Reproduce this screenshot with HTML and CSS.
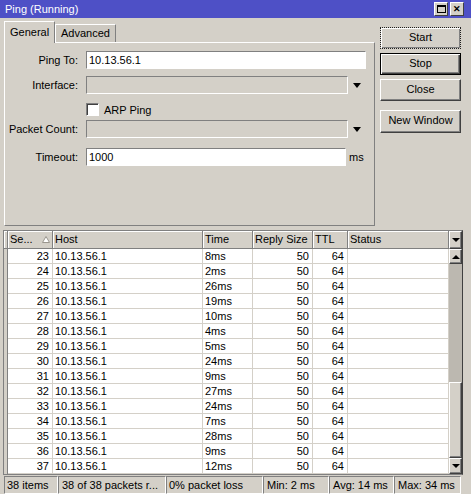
FILE: index.html
```html
<!DOCTYPE html>
<html lang="en">
<head>
    <meta charset="UTF-8">
    <title>Ping (Running)</title>
    <link rel="stylesheet" href="styles.css">
</head>
<body>

<div class="window">
    <div class="titlebar">
        <span class="title">Ping (Running)</span>
        <span class="title-btns">
            <span class="tbtn"><span class="max-box"></span></span>
            <span class="tbtn tbtn-close">&#x2715;</span>
        </span>
    </div>

    <div class="top">
        <div class="tabs-area">
            <div class="tabs">
                <div class="tab active">General</div>
                <div class="tab">Advanced</div>
            </div>
            <div class="panel">
                <div class="form">
                    <label>Ping To:</label>
                    <div class="field"><div class="input w-full">10.13.56.1</div></div>

                    <label>Interface:</label>
                    <div class="field"><div class="input disabled w-drop"></div><span class="drop-arrow"></span></div>

                    <label></label>
                    <div class="field check-field"><span class="checkbox"></span><span class="check-label">ARP Ping</span></div>

                    <label>Packet Count:</label>
                    <div class="field"><div class="input disabled w-drop"></div><span class="drop-arrow"></span></div>

                    <label>Timeout:</label>
                    <div class="field"><div class="input w-unit">1000</div><span class="unit">ms</span></div>
                </div>
            </div>
        </div>

        <div class="buttons">
            <div class="btn btn-focus">Start</div>
            <div class="btn btn-default">Stop</div>
            <div class="btn">Close</div>
            <div class="btn btn-gap">New Window</div>
        </div>
    </div>

    <div class="list">
        <div class="list-body">
            <div class="grid-row head">
                <span class="hc gut"></span>
                <span class="hc sort">Se...<svg width="8" height="7" viewBox="0 0 8 7"><polygon points="4,0.5 7.5,6.5 0.5,6.5" fill="#fff" stroke="#9a968e"/></svg></span>
                <span class="hc">Host</span>
                <span class="hc">Time</span>
                <span class="hc">Reply Size</span>
                <span class="hc">TTL</span>
                <span class="hc">Status</span>
            </div>
            <div class="grid-row row"><span class="c gut"></span><span class="c num">23</span><span class="c">10.13.56.1</span><span class="c">8ms</span><span class="c num">50</span><span class="c num">64</span><span class="c"></span></div>
            <div class="grid-row row"><span class="c gut"></span><span class="c num">24</span><span class="c">10.13.56.1</span><span class="c">2ms</span><span class="c num">50</span><span class="c num">64</span><span class="c"></span></div>
            <div class="grid-row row"><span class="c gut"></span><span class="c num">25</span><span class="c">10.13.56.1</span><span class="c">26ms</span><span class="c num">50</span><span class="c num">64</span><span class="c"></span></div>
            <div class="grid-row row"><span class="c gut"></span><span class="c num">26</span><span class="c">10.13.56.1</span><span class="c">19ms</span><span class="c num">50</span><span class="c num">64</span><span class="c"></span></div>
            <div class="grid-row row"><span class="c gut"></span><span class="c num">27</span><span class="c">10.13.56.1</span><span class="c">10ms</span><span class="c num">50</span><span class="c num">64</span><span class="c"></span></div>
            <div class="grid-row row"><span class="c gut"></span><span class="c num">28</span><span class="c">10.13.56.1</span><span class="c">4ms</span><span class="c num">50</span><span class="c num">64</span><span class="c"></span></div>
            <div class="grid-row row"><span class="c gut"></span><span class="c num">29</span><span class="c">10.13.56.1</span><span class="c">5ms</span><span class="c num">50</span><span class="c num">64</span><span class="c"></span></div>
            <div class="grid-row row"><span class="c gut"></span><span class="c num">30</span><span class="c">10.13.56.1</span><span class="c">24ms</span><span class="c num">50</span><span class="c num">64</span><span class="c"></span></div>
            <div class="grid-row row"><span class="c gut"></span><span class="c num">31</span><span class="c">10.13.56.1</span><span class="c">9ms</span><span class="c num">50</span><span class="c num">64</span><span class="c"></span></div>
            <div class="grid-row row"><span class="c gut"></span><span class="c num">32</span><span class="c">10.13.56.1</span><span class="c">27ms</span><span class="c num">50</span><span class="c num">64</span><span class="c"></span></div>
            <div class="grid-row row"><span class="c gut"></span><span class="c num">33</span><span class="c">10.13.56.1</span><span class="c">24ms</span><span class="c num">50</span><span class="c num">64</span><span class="c"></span></div>
            <div class="grid-row row"><span class="c gut"></span><span class="c num">34</span><span class="c">10.13.56.1</span><span class="c">7ms</span><span class="c num">50</span><span class="c num">64</span><span class="c"></span></div>
            <div class="grid-row row"><span class="c gut"></span><span class="c num">35</span><span class="c">10.13.56.1</span><span class="c">28ms</span><span class="c num">50</span><span class="c num">64</span><span class="c"></span></div>
            <div class="grid-row row"><span class="c gut"></span><span class="c num">36</span><span class="c">10.13.56.1</span><span class="c">9ms</span><span class="c num">50</span><span class="c num">64</span><span class="c"></span></div>
            <div class="grid-row row"><span class="c gut"></span><span class="c num">37</span><span class="c">10.13.56.1</span><span class="c">12ms</span><span class="c num">50</span><span class="c num">64</span><span class="c"></span></div>
        </div>

        <div class="scrollbar">
            <div class="sb-btn sb-head"><span class="arr-down"></span></div>
            <div class="sb-btn sb-up"><span class="arr-up"></span></div>
            <div class="sb-track"></div>
            <div class="sb-thumb"></div>
            <div class="sb-btn sb-down"><span class="arr-down"></span></div>
        </div>
    </div>

    <div class="statusbar">
        <div class="sp w1">38 items</div>
        <div class="sp w2">38 of 38 packets r...</div>
        <div class="sp w3">0% packet loss</div>
        <div class="sp w4">Min: 2 ms</div>
        <div class="sp w5">Avg: 14 ms</div>
        <div class="sp w6">Max: 34 ms</div>
    </div>
</div>

</body>
</html>
```

FILE: styles.css
```css
/* Fenetre style Winbox */
* {
    box-sizing: border-box;
}

body {
    margin: 0;
    background-color: #d4d0c8;
    font-family: "Liberation Sans", Arial, sans-serif;
    font-size: 11px;
    color: #000;
}

.window {
    width: 471px;
    height: 494px;
    overflow: hidden;
    display: flex;
    flex-direction: column;
}

/* Barre de titre */
.titlebar {
    height: 18px;
    flex: none;
    background-color: #4e50c6;
    color: #fff;
    display: flex;
    align-items: center;
    justify-content: space-between;
    padding: 0 7px 0 5px;
}

.title-btns {
    display: flex;
    gap: 2px;
}

.tbtn {
    width: 14px;
    height: 14px;
    background-color: #d4d0c8;
    border: 1px solid;
    border-color: #fff #404040 #404040 #fff;
    display: flex;
    align-items: center;
    justify-content: center;
    color: #000;
    font-size: 9px;
    font-weight: bold;
}

.max-box {
    width: 9px;
    height: 8px;
    border: 1px solid #000;
    border-top-width: 2px;
}

/* Partie haute */
.top {
    height: 212px;
    flex: none;
    display: flex;
    gap: 5px;
    padding: 3px 0 0 4px;
}

.tabs-area {
    width: 371px;
}

.tabs {
    height: 21px;
    display: flex;
    align-items: flex-end;
}

.tab {
    height: 18px;
    padding: 0 5px;
    line-height: 17px;
    background-color: #cdc9c1;
    border: 1px solid;
    border-color: #fff #808080 transparent #fff;
    border-bottom: none;
}

.tab.active {
    width: 51px;
    height: 22px;
    margin-bottom: -1px;
    position: relative;
    z-index: 1;
    padding-left: 5px;
    line-height: 20px;
    background-color: #d4d0c8;
}

.panel {
    height: 184px;
    border: 1px solid;
    border-color: #fff #808080 #808080 #fff;
}

.form {
    display: grid;
    grid-template-columns: 73px 1fr;
    grid-template-rows: 25px 26px 18px 28px 18px;
    column-gap: 8px;
    align-items: start;
    padding-top: 8px;
}

.form label {
    height: 18px;
    line-height: 18px;
    text-align: right;
    white-space: nowrap;
}

.field {
    height: 18px;
    display: flex;
    align-items: center;
}

.input {
    height: 18px;
    border: 1px solid;
    border-color: #808080 #fff #fff #808080;
    background-color: #fff;
    padding: 0 2px;
    line-height: 16px;
}

.input.disabled {
    background-color: #d4d0c8;
}

.w-full { width: 280px; }
.w-drop { width: 262px; }
.w-unit { width: 260px; }

.drop-arrow {
    margin-left: 5px;
    width: 0;
    height: 0;
    border-left: 4px solid transparent;
    border-right: 4px solid transparent;
    border-top: 5px solid #000;
}

.unit {
    margin-left: 3px;
}

.check-field {
    height: 13px;
    margin-top: 1px;
}

.checkbox {
    width: 13px;
    height: 13px;
    background-color: #fff;
    border: 1px solid;
    border-color: #808080 #fff #fff #808080;
    box-shadow: inset 1px 1px 0 #404040;
}

.check-label {
    margin-left: 5px;
}

/* Boutons */
.buttons {
    width: 81px;
    display: flex;
    flex-direction: column;
    gap: 4px;
    padding-top: 6px;
}

.btn {
    height: 22px;
    line-height: 19px;
    text-align: center;
    border: 1px solid;
    border-color: #fff #404040 #404040 #fff;
    box-shadow: inset -1px -1px 0 #808080;
}

.btn-focus {
    border: 1px dotted #202020;
    box-shadow: inset 1px 1px 0 #fff, inset -1px -1px 0 #808080;
}

.btn-default {
    border: 1px solid #000;
    box-shadow: inset 1px 1px 0 #fff, inset -1px -1px 0 #404040, inset -2px -2px 0 #808080;
}

.btn-gap {
    height: 23px;
    margin-top: 5px;
}

/* Liste */
.list {
    width: 460px;
    height: 245px;
    flex: none;
    margin-left: 3px;
    display: flex;
    border: 1px solid;
    border-color: #808080 #404040 #808080 #808080;
}

.list-body {
    width: 445px;
    background-color: #fff;
}

.grid-row {
    display: grid;
    grid-template-columns: 4px 45px 150px 50px 60px 35px 101px;
}

.head {
    height: 18px;
}

.hc {
    background-color: #d4d0c8;
    border-right: 1px solid #808080;
    border-bottom: 1px solid #808080;
    box-shadow: inset 1px 1px 0 #fff;
    padding-left: 2px;
    line-height: 17px;
    white-space: nowrap;
    overflow: hidden;
}

.hc.gut {
    padding: 0;
}

.hc.sort {
    display: flex;
    align-items: center;
    justify-content: space-between;
    padding-right: 2px;
}

.row {
    height: 15px;
}

.row .c {
    background-color: #fff;
    border-right: 1px solid #d4d0c8;
    border-bottom: 1px solid #d4d0c8;
    padding-left: 2px;
    line-height: 14px;
    white-space: nowrap;
    overflow: hidden;
}

.row .gut {
    background-color: #d4d0c8;
    border-right: 1px solid #808080;
    border-bottom: none;
    padding: 0;
}

.row .num {
    text-align: right;
    padding-right: 3px;
}

/* Barre de defilement */
.scrollbar {
    width: 13px;
    display: flex;
    flex-direction: column;
}

.sb-btn,
.sb-thumb {
    background-color: #d4d0c8;
    border: 1px solid;
    border-color: #fff #404040 #404040 #fff;
    box-shadow: inset -1px -1px 0 #808080;
}

.sb-btn {
    display: flex;
    align-items: center;
    justify-content: center;
}

.sb-head { height: 18px; }
.sb-up { height: 15px; }
.sb-down { height: 16px; }

.sb-track {
    height: 118px;
    background-color: #bcb8b0;
}

.sb-thumb {
    height: 76px;
}

.arr-down {
    width: 0;
    height: 0;
    border-left: 4px solid transparent;
    border-right: 4px solid transparent;
    border-top: 4px solid #000;
}

.arr-up {
    width: 0;
    height: 0;
    border-left: 4px solid transparent;
    border-right: 4px solid transparent;
    border-bottom: 4px solid #000;
}

/* Barre d'etat */
.statusbar {
    height: 19px;
    flex: none;
    display: flex;
    margin-top: 1px;
    padding-left: 4px;
}

.sp {
    height: 18px;
    line-height: 16px;
    padding-left: 2px;
    border: 1px solid;
    border-color: #808080 #fff #fff #808080;
    white-space: nowrap;
    overflow: hidden;
}

.w1 { width: 54px; }
.w2 { width: 108px; padding-left: 3px; }
.w3 { width: 97px; }
.w4 { width: 66px; padding-left: 3px; }
.w5 { width: 65px; padding-left: 3px; }
.w6 { width: 67px; padding-left: 3px; }
```
